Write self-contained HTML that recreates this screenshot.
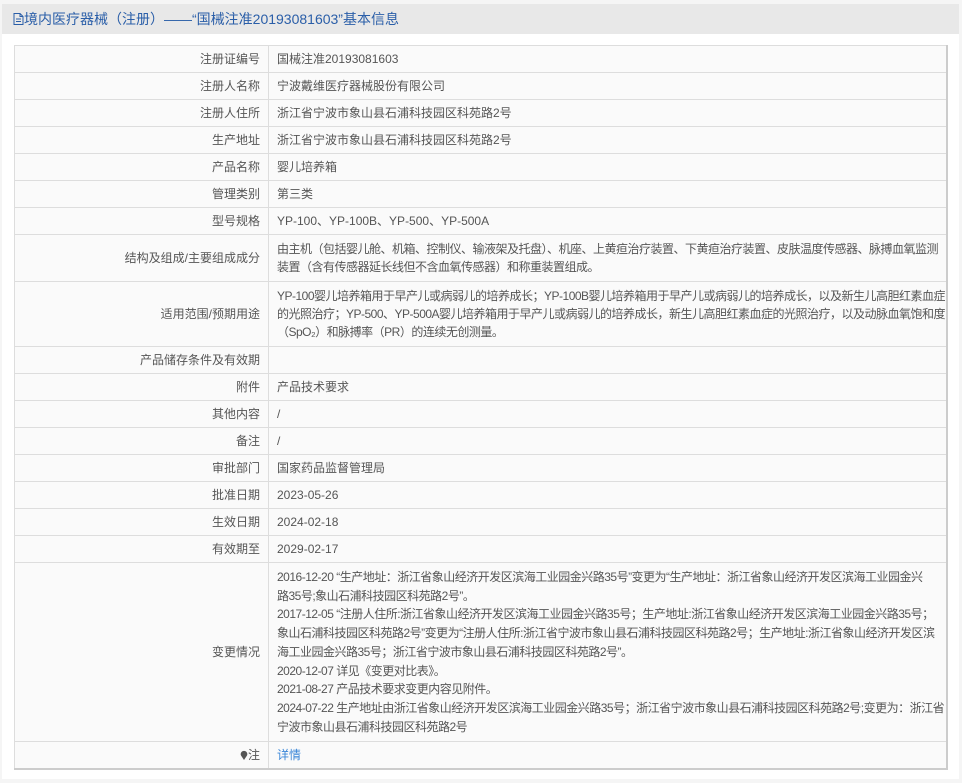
<!DOCTYPE html>
<html><head><meta charset="utf-8"><style>
body{margin:0;background:#f5f5f5;font-family:"Liberation Sans","Noto Sans CJK SC",sans-serif;font-size:12px;color:#555;}
.panel{position:absolute;left:2px;top:4px;width:957px;height:775px;background:#fff;}
.hd{height:30px;background:#e8e8e8;color:#2a5ea8;font-size:14px;line-height:31px;padding-left:11px;}
table{position:absolute;left:12px;top:41px;width:934px;table-layout:fixed;border-collapse:collapse;background:#fafafa;border:1px solid #ccc;border-right:2px solid #ccc;border-bottom:2px solid #ccc;}
td{border:1px solid #ddd;padding:5px 8px;line-height:18px;vertical-align:middle;white-space:nowrap;overflow:hidden;}
td.l{text-align:right;padding-right:8px;}
td.t{letter-spacing:-0.5px;padding-right:2px;}
tr.s td{height:18px;padding-top:4px;padding-bottom:4px;}
tr.b td{line-height:18.7px;}
a{color:#3a86d8;text-decoration:none;}
</style></head><body>
<div class="panel">
<div class="hd"><svg width="11" height="12" viewBox="0 0 11 12" style="vertical-align:-1px"><path d="M1 .5h6l3 3v8H1z M7 .5v3h3 M3 6h5 M3 8.5h5" fill="none" stroke="#2a5ea8"/></svg>境内医疗器械（注册）——“国械注准20193081603”基本信息</div>
<table>
<colgroup><col style="width:254px"><col></colgroup>
<tr class="s"><td class="l">注册证编号</td><td>国械注准20193081603</td></tr>
<tr class="s"><td class="l">注册人名称</td><td>宁波戴维医疗器械股份有限公司</td></tr>
<tr class="s"><td class="l">注册人住所</td><td>浙江省宁波市象山县石浦科技园区科苑路2号</td></tr>
<tr class="s"><td class="l">生产地址</td><td>浙江省宁波市象山县石浦科技园区科苑路2号</td></tr>
<tr class="s"><td class="l">产品名称</td><td>婴儿培养箱</td></tr>
<tr class="s"><td class="l">管理类别</td><td>第三类</td></tr>
<tr class="s"><td class="l">型号规格</td><td>YP-100、YP-100B、YP-500、YP-500A</td></tr>
<tr><td class="l">结构及组成/主要组成成分</td><td class="t">由主机（包括婴儿舱、机箱、控制仪、输液架及托盘）、机座、上黄疸治疗装置、下黄疸治疗装置、皮肤温度传感器、脉搏血氧监测<br>装置（含有传感器延长线但不含血氧传感器）和称重装置组成。</td></tr>
<tr><td class="l">适用范围/预期用途</td><td class="t">YP-100婴儿培养箱用于早产儿或病弱儿的培养成长；YP-100B婴儿培养箱用于早产儿或病弱儿的培养成长，以及新生儿高胆红素血症<br>的光照治疗；YP-500、YP-500A婴儿培养箱用于早产儿或病弱儿的培养成长，新生儿高胆红素血症的光照治疗，以及动脉血氧饱和度<br>（SpO₂）和脉搏率（PR）的连续无创测量。</td></tr>
<tr class="s"><td class="l">产品储存条件及有效期</td><td></td></tr>
<tr class="s"><td class="l">附件</td><td>产品技术要求</td></tr>
<tr class="s"><td class="l">其他内容</td><td>/</td></tr>
<tr class="s"><td class="l">备注</td><td>/</td></tr>
<tr class="s"><td class="l">审批部门</td><td>国家药品监督管理局</td></tr>
<tr class="s"><td class="l">批准日期</td><td>2023-05-26</td></tr>
<tr class="s"><td class="l">生效日期</td><td>2024-02-18</td></tr>
<tr class="s"><td class="l">有效期至</td><td>2029-02-17</td></tr>
<tr class="b"><td class="l">变更情况</td><td class="t">2016-12-20 “生产地址：浙江省象山经济开发区滨海工业园金兴路35号”变更为“生产地址：浙江省象山经济开发区滨海工业园金兴<br>路35号;象山石浦科技园区科苑路2号”。<br>2017-12-05 “注册人住所:浙江省象山经济开发区滨海工业园金兴路35号；生产地址:浙江省象山经济开发区滨海工业园金兴路35号；<br>象山石浦科技园区科苑路2号”变更为“注册人住所:浙江省宁波市象山县石浦科技园区科苑路2号；生产地址:浙江省象山经济开发区滨<br>海工业园金兴路35号；浙江省宁波市象山县石浦科技园区科苑路2号”。<br>2020-12-07 详见《变更对比表》。<br>2021-08-27 产品技术要求变更内容见附件。<br>2024-07-22 生产地址由浙江省象山经济开发区滨海工业园金兴路35号；浙江省宁波市象山县石浦科技园区科苑路2号;变更为：浙江省<br>宁波市象山县石浦科技园区科苑路2号</td></tr>
<tr class="s"><td class="l"><svg width="8" height="10" viewBox="0 0 8 10" style="vertical-align:-1px"><path d="M4 10L1 5.5A3.3 3.3 0 1 1 7 5.5z" fill="#555"/></svg>注</td><td><a>详情</a></td></tr>
</table>
</div>
</body></html>
